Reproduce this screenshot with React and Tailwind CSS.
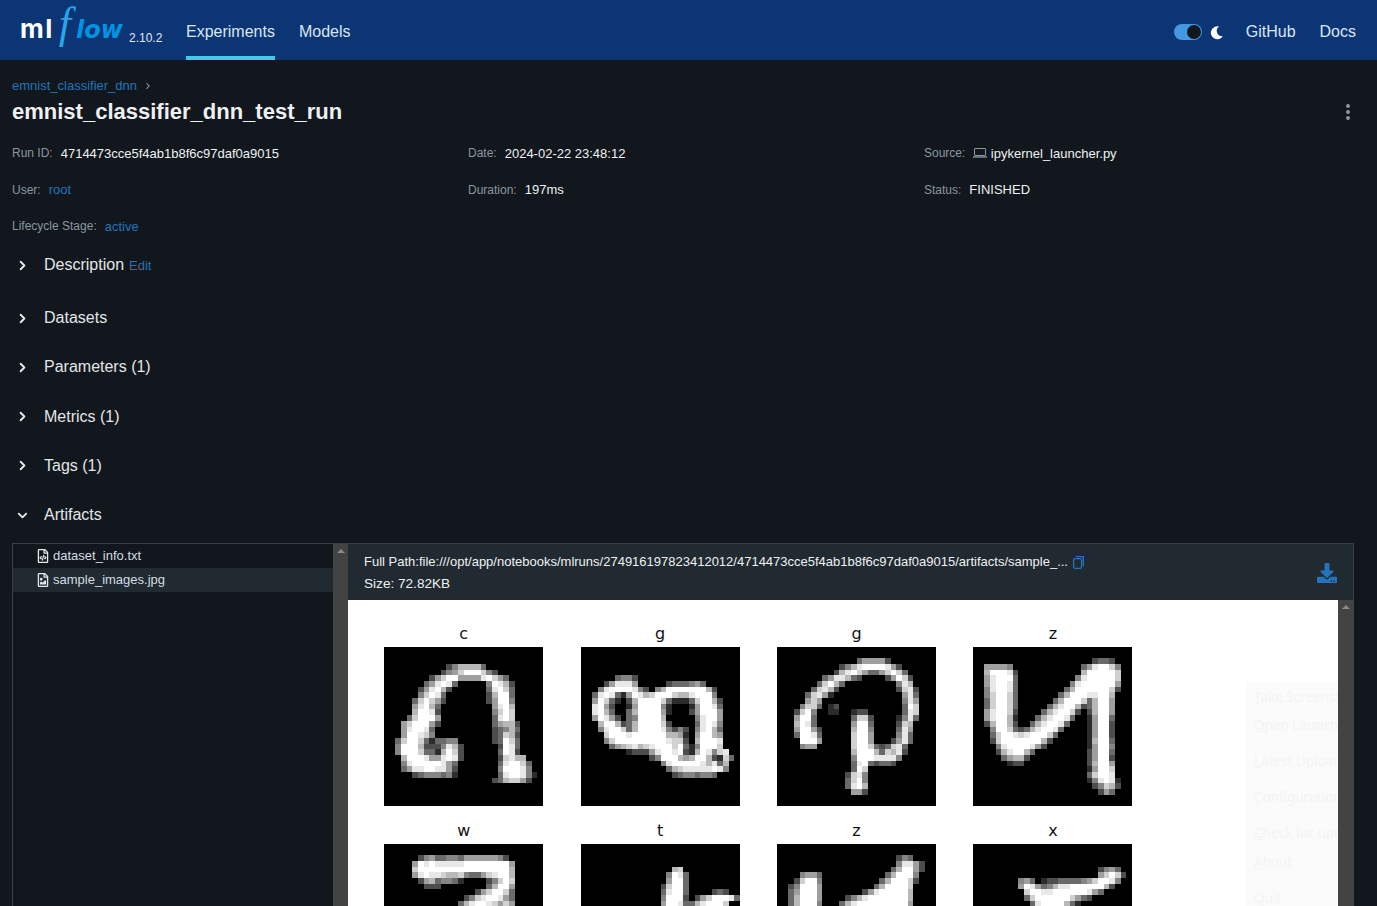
import { FaRegFileCode, FaRegFileImage, FaDownload } from 'react-icons/fa';
import { ChevronRight, ChevronDown } from 'lucide-react';

// Each digit is a 28x28 grid. row: "startCol:levels startCol:levels", levels 0-9
const c1 = {
  3: '11:2466663', 4: '10:2457999742', 5: '8:25799555589753', 6: '7:358983 18:49862', 7: '6:258962 18:38973',
  8: '6:47983 18:26993', 9: '5:379752 18:25994', 10: '5:58963 19:5896', 11: '5:69982 19:4797',
  12: '4:379995 19:3897', 13: '3:5799952 19:35662', 14: '3:589983 19:23463', 15: '3:599874 19:23762',
  16: '2:37997313344 19:23973', 17: '2:499962224862 20:2983', 18: '2:499973316972 20:3982',
  19: '3:69998558982 20:27866', 20: '3:4899999853 20:389973', 21: '3:3588998852 20:499984',
  22: '5:23444341 20:3899841', 23: '19:2367752',
};
const g1 = {
  5: '6:3442', 6: '4:258885 15:2333453', 7: '3:489999842 13:469999999 22:62', 8: '2:38983159867 13:999766 19:89994',
  9: '2:59731 8:26999973111 19:379 22:962', 10: '2:8952 8:15999941 19:159983', 11: '2:8963 8:36999951 19:259995',
  12: '2:59852 8:3499996 20:48995', 13: '3:6996236 10:999972 20:38984', 14: '3:4899736 10:999984242 20:48963',
  15: '4:79998 9:999999 15:6651 20:59965', 16: '4:47 6:999999999 15:8772 20:69998', 17: '5:3567867 12:8999793 19:149997',
  18: '8:12225 13:89989 18:216984 24:78', 19: '12:24999656 20:9962173', 20: '14:4899999 21:86836',
  21: '15:367888 21:88984', 22: '16:23443443',
};
const g2 = {
  2: '14:355552', 3: '11:24689999852', 4: '10:268975 16:3357973', 5: '8:3588632 19:25972', 6: '7:37963 21:486',
  7: '6:37862 21:2782', 8: '5:37851 22:583', 9: '5:575 22:485', 10: '4:4773 9:12 22:397', 11: '3:2794 9:11 13:122 22:387',
  12: '3:5993 13:3772 21:1483', 13: '3:6983 13:5993 21:276', 14: '3:59952 13:6994 21:385', 15: '3:39983 13:7995 21:483',
  16: '4:9995 13:7995 20:2583', 17: '4:455 13:79973 18:23783', 18: '13:699963 19:7682', 19: '13:499988884', 20: '13:38932332',
  21: '13:397', 22: '12:2784', 23: '12:3794', 24: '12:3896', 25: '13:552',
};
const z1 = {
  2: '21:2332', 3: '2:55554 19:3589974', 4: '2:699982 19:6999997', 5: '2:589993 18:48999997',
  6: '2:589983 17:489999995', 7: '2:489983 16:3699999972', 8: '2:479973 15:3699988996',
  9: '2:379973 14:3699973 21:6995', 10: '2:379973 13:36899623 21:6995', 11: '2:589972 12:3689972 20:26995',
  12: '2:589961 11:3689983 20:15993', 13: '2:269962 10:3689983 20:15992',
  14: '3:4997323689983 20:15992', 15: '3:37998 8:78999 13:73 20:15992',
  16: '3:279999999 12:62 20:16993', 17: '4:489999852 20:15994',
  18: '4:2689963 20:25993', 19: '5:35662 20:25992', 20: '6:122 20:26995', 21: '20:15997', 22: '20:37998',
  23: '20:148981', 24: '21:24762', 25: '22:253',
};
const w1 = {
  2: '6:2453344355555542', 3: '5:598988888999999995', 4: '5:799999999999999996', 5: '5:589887667433578996',
  6: '6:25634431 18:24797', 7: '7:222 18:36995', 8: '16:2579973', 9: '14:247899853', 10: '13:3689987 20:575',
};
const t1 = {
  4: '16:67', 5: '15:4983', 6: '15:5993', 7: '14:27993', 8: '14:38993 23:232', 9: '14:49992 20:25799983',
  10: '14:59983368 22:9997',
};
const z2 = {
  2: '21:243', 3: '21:48852', 4: '20:369952', 5: '4:4553 19:369994', 6: '3:27994 18:3699972', 7: '2:249995 17:3699997',
  8: '2:359995 15:258999996', 9: '2:369995 12:2468 16:99999996', 10: '2:369994 11:368 14:9999999995',
};
const x1 = {
  4: '22:2453', 5: '22:57972', 6: '8:453 12:12233334 20:579984', 7: '8:59853468 16:8999999 23:62',
  8: '9:79988 14:999999 20:853', 9: '9:37 11:999999 17:7532', 10: '10:389999631',
};

function Digit({ rows }) {
  const cells = [];
  Object.entries(rows).forEach(([r, row]) => {
    row.split(' ').forEach((seg) => {
      const [start, levels] = seg.split(':');
      [...levels].forEach((lv, i) => {
        if (lv === '0') return;
        const v = Math.round(Math.pow(Number(lv) / 9, 0.8) * 255);
        cells.push(<rect key={`${r}-${start}-${i}`} x={Number(start) + i} y={Number(r)} width="1" height="1" fill={`rgb(${v},${v},${v})`} />);
      });
    });
  });
  return (
    <div className="w-[159px] h-[159px] bg-black overflow-hidden">
      <svg viewBox="0 0 28 28" className="block w-full h-full blur-[0.6px]" shapeRendering="crispEdges">
        {cells}
      </svg>
    </div>
  );
}

const meta = [
  ['Run ID:', '4714473cce5f4ab1b8f6c97daf0a9015'],
  ['Date:', '2024-02-22 23:48:12'],
  ['Source:', 'ipykernel_launcher.py', 'laptop'],
  ['User:', 'root', 'link'],
  ['Duration:', '197ms'],
  ['Status:', 'FINISHED'],
  ['Lifecycle Stage:', 'active', 'link'],
];

const digits = [
  ['c', c1], ['g', g1], ['g', g2], ['z', z1],
  ['w', w1], ['t', t1], ['z', z2], ['x', x1],
];

// faint menu that was captured in the sample image
const ghostItems = [
  ['T', 'ake Screenshot', 'mt-0'],
  ['O', 'pen Launcher', 'mt-[8px]'],
  ['L', 'atest Uploads', 'mt-[16px]'],
  ['C', 'onfiguration', 'mt-[16px]'],
  ['C', 'heck for updates', 'mt-[16px]'],
  ['A', 'bout', 'mt-[9px]'],
  ['Q', 'uit', 'mt-[16px]'],
];

function Section({ label, open, children, className }) {
  const Icon = open ? ChevronDown : ChevronRight;
  return (
    <div className={`flex items-center h-[49.25px] ${className || ''}`}>
      <Icon size={15} strokeWidth={3} className="ml-[3px] text-[#e5e8ea]" />
      <span className="ml-[14px] text-[16px] text-[#e2e6e9]">{label}</span>
      {children}
    </div>
  );
}

function Scrollbar({ className }) {
  return (
    <div className={`w-[15px] shrink-0 bg-[#434343] flex justify-center pt-[5px] ${className || ''}`}>
      <div className="w-0 h-0 border-x-[4px] border-x-transparent border-b-[4px] border-b-[#8a8a8a]" />
    </div>
  );
}

export default function App() {
  return (
    <div className="h-screen overflow-hidden bg-[#11171c] font-['Liberation_Sans',Arial,sans-serif] text-[#e5e8ea]">
      <header className="h-[60px] bg-[#0b3574] flex items-center justify-between pl-[20px] pr-[21px]">
        <div className="flex items-center h-full">
          <div className="flex items-baseline w-[109px] h-full pt-[4px] leading-none select-none">
            <span className="text-[26px] font-bold text-white font-['Inter',sans-serif] tracking-[1.5px]">ml</span>
            <span className="text-[44px] leading-[40px] italic text-[#2aa5e8] font-['Liberation_Serif',serif] ml-[5px] mr-[5px]">f</span>
            <span className="text-[24px] italic font-bold text-[#0194e2] font-['DejaVu_Sans',sans-serif]">low</span>
          </div>
          <span className="text-[12px] text-[#e2e8f0] mt-[15px] w-[57px]">2.10.2</span>
          <nav className="flex h-full text-[16px] text-[#dbe6f2] gap-[24px]">
            <div className="h-full flex items-center border-b-4 border-[#43c9ed] pt-[8px]">Experiments</div>
            <div className="h-full flex items-center pt-[4px]">Models</div>
          </nav>
        </div>
        <div className="flex items-center text-[16px] text-[#dbe6f2] pt-[4px]">
          <div className="w-[28px] h-[16px] rounded-full bg-[#4299e0] flex justify-end items-center pr-[1px] mr-[8px]">
            <div className="w-[14px] h-[14px] rounded-full bg-[#11171c]" />
          </div>
          <svg viewBox="0 0 16 16" className="w-[13px] h-[15px] mr-[23px]" fill="#fff">
            <path d="M11.2 0.6A8 8 0 1 0 15.8 12.6 6.6 6.6 0 0 1 11.2 0.6Z" />
          </svg>
          <span className="mr-[24px]">GitHub</span>
          <span>Docs</span>
        </div>
      </header>

      <main className="px-3">
        <div className="flex items-center pt-[18px] h-[34px] text-[13px] text-[#2374bb]">
          emnist_classifier_dnn
          <ChevronRight size={10} strokeWidth={2.5} className="ml-[6px] text-[#a3aeb8]" />
        </div>
        <div className="flex items-center justify-between h-[36px]">
          <h1 className="text-[22px] leading-none font-bold text-[#eef1f3]">emnist_classifier_dnn_test_run</h1>
          <div className="flex flex-col gap-[2px] mr-[15px]">
            <span className="w-[4px] h-[4px] rounded-full bg-[#8c96a0]" />
            <span className="w-[4px] h-[4px] rounded-full bg-[#8c96a0]" />
            <span className="w-[4px] h-[4px] rounded-full bg-[#8c96a0]" />
          </div>
        </div>

        <div className="grid grid-cols-[456px_456px_1fr] pt-[5px] auto-rows-[36.5px] items-center">
          {meta.map(([k, v, kind]) => (
            <div key={k} className="flex items-center">
              <span className="text-[12px] text-[#8c96a0] mr-[8px]">{k}</span>
              {kind === 'laptop' && (
                <svg viewBox="0 0 14 10" className="w-[14px] h-[10px] mr-[3.5px] text-[#8c96a0]" fill="none" stroke="currentColor">
                  <rect x="1.5" y="0.5" width="11" height="7" rx="0.5" />
                  <path d="M0 9H14" strokeWidth="1.4" />
                </svg>
              )}
              <span className={`text-[13px] ${kind === 'link' ? 'text-[#2374bb]' : 'text-[#eef1f3]'}`}>{v}</span>
            </div>
          ))}
        </div>

        <Section label="Description" className="!h-[53px] mt-[-4px] pb-[4px]">
          <span className="ml-[5px] text-[13px] text-[#2374bb] mt-[1px]">Edit</span>
        </Section>
        <Section label="Datasets" />
        <Section label="Parameters (1)" />
        <Section label="Metrics (1)" />
        <Section label="Tags (1)" />
        <Section label="Artifacts" open />

        <div className="mt-[3px] h-[500px] w-[1342px] border border-[#37424a] flex">
          <div className="w-[320px] shrink-0 text-[13px] text-[#d3dce3]">
            <div className="h-[24px] flex items-center pl-[24px]">
              <FaRegFileCode className="w-[12px] h-[14px] text-[#e5e8ea] mr-[4px]" />
              dataset_info.txt
            </div>
            <div className="h-[24px] flex items-center pl-[24px] bg-[#212a30]">
              <FaRegFileImage className="w-[12px] h-[14px] text-[#e5e8ea] mr-[4px]" />
              sample_images.jpg
            </div>
          </div>
          <Scrollbar />
          <div className="flex-1 min-w-0 flex flex-col">
            <div className="h-[56px] shrink-0 bg-[#212a30] flex items-center justify-between pl-[16px] pr-[16px]">
              <div className="text-[#eef1f3] pt-[2px]">
                <div className="flex items-center text-[13px] leading-[18px] mt-[1px]">
                  Full Path:file:///opt/app/notebooks/mlruns/274916197823412012/4714473cce5f4ab1b8f6c97daf0a9015/artifacts/sample_...
                  <svg viewBox="0 0 12 14" className="w-[11px] h-[13px] ml-[5px] text-[#2374bb]" fill="none" stroke="currentColor" strokeWidth="1.4">
                    <rect x="0.7" y="2.7" width="8.6" height="10.6" rx="1.4" />
                    <path d="M3 .7H11.3V11" />
                  </svg>
                </div>
                <div className="text-[13.6px] leading-[18px] mt-[4px]">Size: 72.82KB</div>
              </div>
              <FaDownload className="w-[20px] h-[20px] text-[#2374bb] mt-[2px]" />
            </div>
            <div className="flex-1 flex min-h-0">
              <div className="relative flex-1 bg-white overflow-hidden pl-[36.2px] pt-[23px]">
                <div className="grid grid-cols-[repeat(4,159px)] gap-x-[37.4px]">
                  {digits.map(([label, rows], i) => (
                    <div key={i} className="mb-[14px]">
                      <div className="h-[24px] text-center text-[16px] leading-[22px] text-[#111] font-['DejaVu_Sans',sans-serif]">{label}</div>
                      <Digit rows={rows} />
                    </div>
                  ))}
                </div>
                <div className="absolute left-[897px] top-[82px] w-[120px] h-[300px] bg-[#fbfbfb] pl-[9px] pt-[5px] text-[13.5px] leading-[20px] text-[#f4f4f4] font-['Noto_Sans',sans-serif] whitespace-nowrap">
                  {ghostItems.map(([u, rest, gap]) => (
                    <div key={rest} className={gap}>
                      <span className="underline">{u}</span>{rest}
                    </div>
                  ))}
                </div>
              </div>
              <Scrollbar />
            </div>
          </div>
        </div>
      </main>
    </div>
  );
}
